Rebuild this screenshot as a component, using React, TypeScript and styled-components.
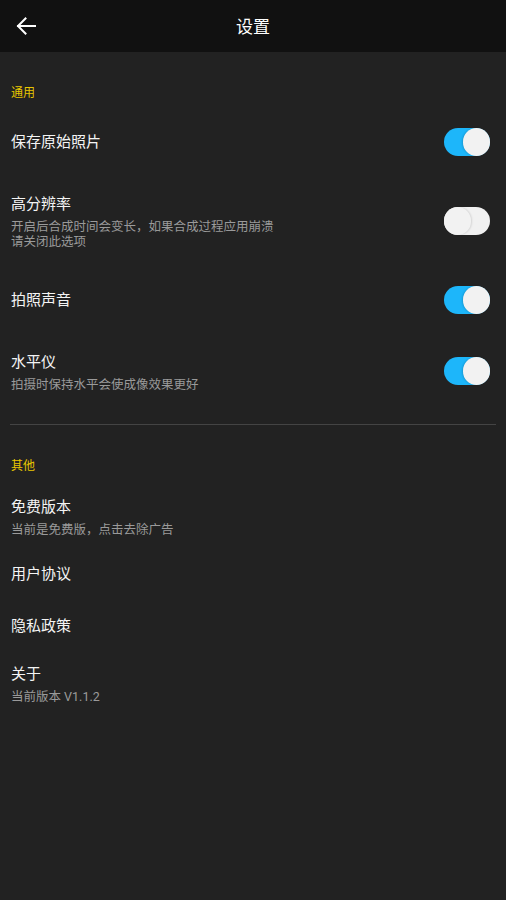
import React, { useState } from 'react';
import styled, { createGlobalStyle } from 'styled-components';

const GlobalStyle = createGlobalStyle`
  html, body {
    margin: 0;
    padding: 0;
    background: #222222;
  }
  body {
    font-family: Roboto, "Noto Sans CJK SC", "Noto Sans", sans-serif;
  }
`;

interface ToggleItem {
  title: string;
  sub?: string[];
  on: boolean;
}

const generalItems: ToggleItem[] = [
  { title: '保存原始照片', on: true },
  { title: '高分辨率', sub: ['开启后合成时间会变长，如果合成过程应用崩溃', '请关闭此选项'], on: false },
  { title: '拍照声音', on: true },
  { title: '水平仪', sub: ['拍摄时保持水平会使成像效果更好'], on: true },
];

const otherItems = [
  { title: '免费版本', sub: '当前是免费版，点击去除广告' },
  { title: '用户协议' },
  { title: '隐私政策' },
  { title: '关于', sub: '当前版本 V1.1.2' },
];

export default function App() {
  const [toggles, setToggles] = useState(generalItems.map((i) => i.on));
  const flip = (index: number) => {
    setToggles(toggles.map((v, i) => (i === index ? !v : v)));
  };
  return (
    <Page>
      <GlobalStyle />
      <Header>
        <BackButton aria-label="返回">
          <svg width="20" height="18" viewBox="0 0 20 18" fill="none">
            <path
              d="M19 9H2M9.5 1.5L2 9l7.5 7.5"
              stroke="#ffffff"
              strokeWidth="2"
              strokeLinecap="square"
            />
          </svg>
        </BackButton>
        <HeaderTitle>设置</HeaderTitle>
      </Header>

      <SectionTitle $after={7}>通用</SectionTitle>
      {generalItems.map((item, index) => (
        <ToggleRow key={item.title} onClick={() => flip(index)}>
          <TextBlock>
            <ItemTitle>{item.title}</ItemTitle>
            {item.sub && (
              <ItemSub>
                {item.sub.map((line) => (
                  <div key={line}>{line}</div>
                ))}
              </ItemSub>
            )}
          </TextBlock>
          <Switch $on={toggles[index]}>
            <Thumb $on={toggles[index]} />
          </Switch>
        </ToggleRow>
      ))}

      <Divider />

      <SectionTitle $after={10}>其他</SectionTitle>
      {otherItems.map((item) => (
        <LinkRow key={item.title}>
          <ItemTitle>{item.title}</ItemTitle>
          {item.sub && <ItemSub>{item.sub}</ItemSub>}
        </LinkRow>
      ))}
    </Page>
  );
}

const Page = styled.div`
  display: flex;
  flex-direction: column;
  width: 506px;
  min-height: 900px;
  background: #222222;
`;

const Header = styled.div`
  position: relative;
  display: flex;
  align-items: center;
  justify-content: center;
  height: 52px;
  background: #111111;
`;

const BackButton = styled.button`
  position: absolute;
  left: 16px;
  top: 17px;
  padding: 0;
  border: none;
  background: none;
  display: flex;
  cursor: pointer;
`;

const HeaderTitle = styled.div`
  color: #ffffff;
  font-size: 17px;
  line-height: 22px;
  margin-top: 2px;
`;

const SectionTitle = styled.div<{ $after: number }>`
  color: #e8c600;
  font-size: 12px;
  line-height: 18px;
  padding: 32px 11px ${({ $after }) => $after}px;
`;

const ToggleRow = styled.div`
  display: flex;
  align-items: center;
  justify-content: space-between;
  padding: 18.5px 16px 18.5px 11px;
  cursor: pointer;
`;

const TextBlock = styled.div`
  display: flex;
  flex-direction: column;
`;

const ItemTitle = styled.div`
  color: #f4f4f4;
  font-size: 15px;
  line-height: 22px;
`;

const ItemSub = styled.div`
  color: #9a9a9a;
  font-size: 12.5px;
  line-height: 15px;
  margin-top: 4px;
`;

const Switch = styled.div<{ $on: boolean }>`
  position: relative;
  width: 46px;
  height: 28px;
  border-radius: 14px;
  background: ${({ $on }) => ($on ? '#1db6fa' : '#f1f1f1')};
  flex-shrink: 0;
`;

const Thumb = styled.div<{ $on: boolean }>`
  position: absolute;
  top: 0;
  left: ${({ $on }) => ($on ? '19px' : '0')};
  width: 27px;
  height: 28px;
  border-radius: 14px;
  background: #f2f2f2;
  box-shadow: ${({ $on }) =>
    $on ? '-1px 0 2px rgba(0, 0, 0, 0.15)' : '1px 0 2px rgba(0, 0, 0, 0.12)'};
`;

const Divider = styled.div`
  height: 1px;
  margin: 14px 10px 0;
  background: #444444;
`;

const LinkRow = styled.div`
  display: flex;
  flex-direction: column;
  justify-content: center;
  box-sizing: border-box;
  min-height: 52px;
  padding: 11px 11px;
  cursor: pointer;
`;
